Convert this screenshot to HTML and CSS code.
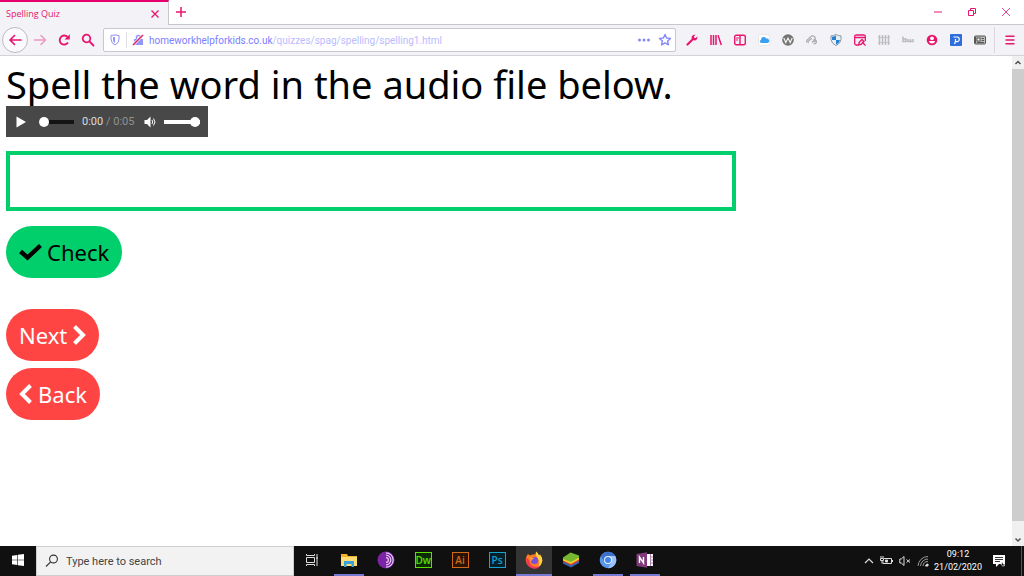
FILE: index.html
```html
<!DOCTYPE html>
<html lang="en">
<head>
<meta charset="utf-8">
<title>Spelling Quiz</title>
<link rel="stylesheet" href="styles.css">
</head>
<body>
<div class="screen">
  <header class="titlebar">
    <div class="tab">
      <span class="tab-title">Spelling Quiz</span>
      <button class="tab-close" aria-label="Close tab"><svg width="8" height="8" viewBox="0 0 8 8"><path d="M.5 .5l7 7M7.500 .5l-7 7" stroke="currentColor" stroke-width="1.300"/></svg></button>
    </div>
    <div class="strip">
      <button class="new-tab" aria-label="New tab"><svg width="12" height="12" viewBox="0 0 12 12"><path d="M6 1v10M1 6h10" stroke="currentColor" stroke-width="1.500"/></svg></button>
      <div class="window-controls">
        <button aria-label="Minimise"><svg width="10" height="10" viewBox="0 0 10 10"><path d="M1 5h8" stroke="currentColor"/></svg></button>
        <button aria-label="Restore"><svg width="10" height="10" viewBox="0 0 10 10" fill="none" stroke="currentColor"><path d="M1.500 3.500h5v5h-5zM3.500 3v-1.500h5v5H7"/></svg></button>
        <button aria-label="Close"><svg width="10" height="10" viewBox="0 0 10 10"><path d="M1 1l8 8M9 1L1 9" stroke="currentColor" stroke-width=".8"/></svg></button>
      </div>
    </div>
  </header>

  <nav class="toolbar">
    <button class="back" aria-label="Go back"><svg width="14" height="14" viewBox="0 0 14 14" fill="none" stroke="currentColor" stroke-width="1.700" stroke-linecap="round" stroke-linejoin="round"><path d="M13 7H2M6.500 2.500L2 7l4.500 4.500"/></svg></button>
    <button class="tool faded" aria-label="Go forward"><svg width="14" height="14" viewBox="0 0 14 14" fill="none" stroke="currentColor" stroke-width="1.500" stroke-linecap="round" stroke-linejoin="round"><path d="M1.500 7H12M8 2.500L12.500 7 8 11.500"/></svg></button>
    <button class="tool" aria-label="Reload"><svg width="14" height="14" viewBox="0 0 14 14"><path d="M11 9.500A4.500 4.500 0 1 1 10.500 4" fill="none" stroke="currentColor" stroke-width="1.900"/><path d="M12.800 1.200v5.300H7.500z" fill="currentColor"/></svg></button>
    <button class="tool" aria-label="Search"><svg width="14" height="14" viewBox="0 0 14 14" fill="none" stroke="currentColor" stroke-width="1.800" stroke-linecap="round"><circle cx="5.500" cy="5.500" r="3.800"/><path d="M8.500 8.500l4 4"/></svg></button>
    <div class="urlbar">
      <svg width="12" height="12" viewBox="0 0 12 12" fill="none" stroke="#8f92ee"><path d="M2 1.500Q6 .5 10 1.500V5Q10 9 6 11 2 9 2 5z"/><path d="M6 3v6Q4 8 4 5V3.200z" fill="#8f92ee" stroke="none"/></svg>
      <span class="url-line"></span>
      <svg width="12" height="12" viewBox="0 0 12 12"><rect x="2" y="5" width="9" height="6" fill="#9295fa"/><path d="M4.500 5V3.500a2 2 0 0 1 4 0V5" fill="none" stroke="#9295fa" stroke-width="1.500"/><path d="M1 11L11 1" stroke="#fff" stroke-width="2.600"/><path d="M1 11L11 1" stroke="#e3256b" stroke-width="1.600"/></svg>
      <span class="url"><span class="host">homeworkhelpforkids.co.uk</span>/quizzes/spag/spelling/spelling1.html</span>
      <button class="url-action" aria-label="Page actions"><svg width="14" height="12" viewBox="0 0 14 12" fill="#8589f5"><circle cx="2.500" cy="6" r="1.500"/><circle cx="7" cy="6" r="1.500"/><circle cx="11.500" cy="6" r="1.500"/></svg></button>
      <button class="url-action" aria-label="Bookmark"><svg width="14" height="14" viewBox="0 0 14 14"><path d="M7 1.500l1.600 3.500 3.900.4-2.900 2.600.9 3.900L7 9.900l-3.500 2 .9-3.900L1.500 5.400l3.900-.4z" fill="none" stroke="#8589f5" stroke-width="1.400" stroke-linejoin="round"/></svg></button>
    </div>
    <div class="extensions">
      <button class="tool" aria-label="Developer tools"><svg width="12" height="12" viewBox="0 0 12 12"><path d="M1.500 10.500L7 5" stroke="currentColor" stroke-width="2.200" stroke-linecap="round"/><path d="M9.500.8L8 2.300l.2 1.500 1.500.2 1.600-1.500C12 5 10 7 7.500 6.300L5.700 4.500C5 2.500 7 0 9.500.8z" fill="currentColor"/></svg></button>
      <button class="tool" aria-label="Library"><svg width="12" height="12" viewBox="0 0 12 12" stroke="currentColor" stroke-width="1.500"><path d="M1 1v10M3.500 1v10M6 1v10M8 1.300l3.300 9.700"/></svg></button>
      <button class="tool" aria-label="Sidebars"><svg width="12" height="12" viewBox="0 0 12 12" fill="none" stroke="currentColor" stroke-width="1.400"><rect x=".7" y="1.200" width="10.600" height="9.600" rx="1.500"/><path d="M6 1v10"/><path d="M2 4h3M2 6h2" stroke-width="1"/></svg></button>
      <button class="tool" aria-label="Cloud"><svg width="12" height="12" viewBox="0 0 12 12"><rect x=".5" y=".5" width="11" height="11" rx="2" fill="#fff" stroke="#e6e6eb"/><path d="M3 9a1.800 1.800 0 0 1 0-3.300A2.800 2.800 0 0 1 8.300 4.600 2.200 2.200 0 0 1 9.500 9z" fill="#3aa0f3"/></svg></button>
      <button class="tool" aria-label="WordPress"><svg width="12" height="12" viewBox="0 0 12 12"><circle cx="6" cy="6" r="5.800" fill="#747474"/><path d="M1.800 4l2 4.500L6 4l2.200 4.500 2-4.500" fill="none" stroke="#f2f2f2" stroke-width="1.200"/></svg></button>
      <button class="tool" aria-label="Link tool"><svg width="12" height="12" viewBox="0 0 12 12" fill="none" stroke="#aaa" stroke-width="1.200"><path d="M1 8.500Q0 6 2.500 5l2-2a2.600 2.600 0 0 1 4.500 2.500L6 8.500"/><path d="M2.500 9a1.500 1.500 0 0 1 .5-2.500L6 4.500M7.500 9.500a2 2 0 1 0 0-3.500M8 8l2-1"/></svg></button>
      <button class="tool" aria-label="Security"><svg width="12" height="12" viewBox="0 0 12 12"><path d="M6 .5Q8.500 2 11 1.800V5.500Q10.500 9.500 6 11.600 1.500 9.500 1 5.500V1.800Q3.500 2 6 .5z" fill="#e7f0f7" stroke="#8c99a6"/><path d="M6 1.500V6H2V2.700Q4 2.700 6 1.500zM6 6h4Q9.500 8.800 6 10.500z" fill="#2580d0"/></svg></button>
      <button class="tool" aria-label="Page editor"><svg width="12" height="12" viewBox="0 0 12 12" fill="none" stroke="currentColor" stroke-width="1.300"><path d="M11.300 7V2.500Q11.300 1 9.800 1H2.200Q.7 1 .7 2.500v7Q.7 11 2.200 11H5M1 3.500h10"/><path d="M5 8.500l3-3 2 2-3 3H5zM8 8l3.500 3.500"/></svg></button>
      <button class="tool" aria-label="Fence"><svg width="12" height="12" viewBox="0 0 12 12" stroke="#bcbcc0"><path d="M1.500 1v10M4.500 1v10M7.500 1v10M10.500 1v10" stroke-width="1.500"/><path d="M0 3.500h12M0 8.500h12" stroke-width=".7"/></svg></button>
      <button class="tool" aria-label="bw"><svg width="12" height="12" viewBox="0 0 12 12" fill="none" stroke="#bbb" stroke-width="1.500"><path d="M1 2.500v5h3V5H1M6 5v2.500h5V5M8.500 5v2.500"/></svg></button>
      <button class="tool" aria-label="Account"><svg width="12" height="12" viewBox="0 0 12 12"><circle cx="6" cy="6" r="5.300" fill="currentColor"/><circle cx="6" cy="4.300" r="1.900" fill="#fff"/><path d="M2.800 7h6.400Q8.500 9.500 6 9.500T2.800 7z" fill="#fff"/></svg></button>
      <button class="tool" aria-label="Payments"><svg width="12" height="12" viewBox="0 0 12 12"><rect width="12" height="12" rx="1" fill="#2e6fdd"/><path d="M3.500 3H7a2.300 2.300 0 0 1 0 4.600H5.500V5M4.500 10l1-2.500" fill="none" stroke="#fff" stroke-width="1.200"/></svg></button>
      <button class="tool" aria-label="News reader"><svg width="12" height="12" viewBox="0 0 12 12" fill="none" stroke="#555"><rect x=".5" y="2" width="11" height="8" rx="1" fill="#bbb"/><rect x="3" y="4" width="3" height="3" fill="#fff"/><path d="M1.500 3v6M7.500 4.500H10M7.500 6.500H10M3 8.500h7"/></svg></button>
    </div>
    <span class="divider"></span>
    <button class="tool" aria-label="Menu"><svg width="10" height="10" viewBox="0 0 10 10" stroke="currentColor" stroke-width="1.500"><path d="M.5 1.200h9M.5 5h9M.5 8.800h9"/></svg></button>
  </nav>

  <div class="viewport">
    <main class="page">
      <h1>Spell the word in the audio file below.</h1>
      <div class="player">
        <button class="player-button" aria-label="Play"><svg width="10" height="12" viewBox="0 0 10 12"><path d="M.5 .5l9.500 5.500-9.500 5.500z" fill="#fff"/></svg></button>
        <input class="slider seek" type="range" min="0" max="5" value="0" aria-label="Position">
        <span class="time">0:00 <span class="duration">/ 0:05</span></span>
        <button class="player-button" aria-label="Mute"><svg width="13" height="12" viewBox="0 0 13 12"><path d="M.5 4H3l3.500-3.500v11L3 8H.5z" fill="#fff"/><path d="M8 4q1.500 2 0 4M9.500 2.500q3 3.500 0 7" fill="none" stroke="#fff"/></svg></button>
        <input class="slider volume" type="range" min="0" max="100" value="100" aria-label="Volume">
      </div>
      <input class="answer" type="text" aria-label="Your spelling">
      <button class="pill check"><svg width="23" height="18" viewBox="0 0 23 18"><path d="M1.500 8.500l7 6L21.500 2.500" fill="none" stroke="currentColor" stroke-width="4.400"/></svg>Check</button>
      <div class="links">
        <button class="pill">Next<svg width="14" height="20" viewBox="0 0 14 20"><path d="M2.500 1.500L11 10l-8.500 8.500" fill="none" stroke="currentColor" stroke-width="4"/></svg></button>
        <button class="pill"><svg width="14" height="20" viewBox="0 0 14 20"><path d="M11.500 1.500L3 10l8.500 8.500" fill="none" stroke="currentColor" stroke-width="4"/></svg>Back</button>
      </div>
    </main>
    <div class="scrollbar">
      <svg width="12" height="13" viewBox="0 0 12 13"><path d="M3.500 8L6 5.500 8.500 8" fill="none" stroke="#505050" stroke-width="1.500"/></svg>
      <div class="thumb"></div>
      <svg width="12" height="13" viewBox="0 0 12 13"><path d="M3.500 5.500L6 8l2.500-2.500" fill="none" stroke="#505050" stroke-width="1.500"/></svg>
    </div>
  </div>

  <footer class="taskbar">
    <button class="app start" aria-label="Start"><svg width="12" height="12" viewBox="0 0 12 12" fill="#fff"><path d="M0 1.700l5.300-.8v4.800H0zM5.900.8L12 0v5.700H5.900zM0 6.300h5.300v4.800L0 10.300zM5.900 6.300H12V12l-6.100-.8z"/></svg></button>
    <label class="search">
      <svg width="14" height="14" viewBox="0 0 14 14" fill="none" stroke="#333" stroke-width="1.100"><circle cx="8.500" cy="5" r="3.900"/><path d="M5.700 7.800L1 12.500"/></svg>
      <input type="text" placeholder="Type here to search" aria-label="Search Windows">
    </label>
    <div class="apps">
      <button class="app" aria-label="Task view"><svg width="12" height="12" viewBox="0 0 12 12" fill="none" stroke="#ddd"><path d="M.5 3.500h8v5h-8zM.5 0v1.500h8V0M.5 12v-1.500h8V12M11 0v12M10 4h2"/></svg></button>
      <button class="app open" aria-label="File Explorer"><svg width="18" height="16" viewBox="0 0 18 16"><path d="M1 2h6l1 2h9v10H1z" fill="#f0b429"/><path d="M1 5h16v9H1z" fill="#ffdc73"/><path d="M4 15V9h10v6h-2.500v-3h-5v3z" fill="#36a3dc"/></svg></button>
      <button class="app" aria-label="Tor Browser"><svg width="18" height="18" viewBox="0 0 18 18"><circle cx="9" cy="9" r="8.500" fill="#7b25a6"/><g fill="none" stroke="#e9c9f5" stroke-width="1.200"><path d="M9 1.800a7.200 7.200 0 0 1 0 14.400M9 4.200a4.800 4.800 0 0 1 0 9.600M9 6.600a2.400 2.400 0 0 1 0 4.800"/></g></svg></button>
      <button class="app" aria-label="Dreamweaver"><span class="adobe dw">Dw</span></button>
      <button class="app" aria-label="Illustrator"><span class="adobe ai">Ai</span></button>
      <button class="app" aria-label="Photoshop"><span class="adobe ps">Ps</span></button>
      <button class="app open active" aria-label="Firefox"><svg width="18" height="18" viewBox="0 0 18 18"><path d="M3 3l2 1.500Q7 3 9 3.500 11 3 11 .5q2 1.500 3 4l1-1q2.500 3 2.300 6.500A8.300 8.300 0 1 1 1 7Q1.300 5 3 3z" fill="#ff7a22"/><path d="M11 .5q2 1.500 3 4l1-1q2.500 3 2.300 6.500-.8 4-4 6Q16 10 11 4.500z" fill="#ffd33c"/><path d="M1.500 6.500Q0 15 8.500 17.800q4 .5 6.500-2.500Q5 18 4.500 10z" fill="#f5315e"/><circle cx="9.500" cy="9.500" r="3.600" fill="#7650dc"/><path d="M4.500 6q3 0 5 1.500-2 .2-2.500 1.500l-1.500 2z" fill="#ff9b2c"/></svg></button>
      <button class="app" aria-label="BlueStacks"><svg width="18" height="16" viewBox="0 0 18 16"><path d="M1 10l8-4 8 3v2l-8 4.500-8-4z" fill="#2769b5"/><path d="M1 8l8-4 8 3v2l-8 4.500-8-4z" fill="#d93d32"/><path d="M1 6.500L9 3l8 2.500v2L9 12 1 8.500z" fill="#f5cc2e"/><path d="M1 5.500L8.500.5 17 3.500v2L9 10 1 7z" fill="#75b82d"/></svg></button>
      <button class="app open" aria-label="Chromium"><svg width="18" height="18" viewBox="0 0 18 18"><circle cx="9" cy="9" r="8.300" fill="#5b98ec"/><path d="M1.800 5A8.300 8.300 0 0 1 16.300 5H9L5.500 11z" fill="#3b70cb"/><path d="M9 17.300A8.300 8.300 0 0 0 16.300 5H9l3.700 6z" fill="#9bc3fa"/><circle cx="9" cy="9" r="4" fill="#e9f2ff"/><circle cx="9" cy="9" r="3" fill="#4384e3"/></svg></button>
      <button class="app open" aria-label="OneNote"><svg width="18" height="16" viewBox="0 0 18 16"><path d="M9 2h8v12H9z" fill="#fff"/><path d="M14.500 2v12M14.500 5H17M14.500 8H17M14.500 11H17" stroke="#a878a8" stroke-width=".9"/><path d="M.5 2L11 .3v15.400L.5 14z" fill="#80397b"/><path d="M3.500 11V5l4 6V5" fill="none" stroke="#fff" stroke-width="1.400"/></svg></button>
    </div>
    <div class="tray">
      <svg width="10" height="12" viewBox="0 0 10 12"><path d="M1 8l4-4 4 4" fill="none" stroke="#ddd" stroke-width="1.200"/></svg>
      <svg width="13" height="12" viewBox="0 0 13 12" fill="none" stroke="#ddd"><path d="M4 3.500h7.500v5H3V6.500M12.500 5v2"/><path d="M1 1v2M3 1v2M.5 3.500h3v2h-3zM2 5.500v3"/><path d="M5.500 5h2v2h-2z" fill="#ddd"/></svg>
      <svg width="12" height="12" viewBox="0 0 12 12" fill="none" stroke="#ddd"><path d="M.8 4h1.500L5 1.500v9L2.300 8H.8zM7.500 4.500l3.500 3M11 4.500l-3.500 3"/></svg>
      <svg width="12" height="12" viewBox="0 0 12 12" fill="none" stroke="#999"><path d="M1 11A10 10 0 0 1 11 1.500M3.500 11A7.500 7.500 0 0 1 11 4M6 11a5 5 0 0 1 5-4.500"/><path d="M8.500 11A2.500 2.500 0 0 1 11 9v2z" fill="#ddd" stroke="#ddd"/></svg>
      <div class="clock"><span>09:12</span><span>21/02/2020</span></div>
      <svg width="14" height="14" viewBox="0 0 14 14"><path d="M1 1h12v9H7l-3 3v-3H1z" fill="#fff"/><path d="M3 3.500h8M3 5.500h8M3 7.500h5" stroke="#222" stroke-width=".9"/><path d="M11 8a2 2 0 1 0 2 3 2.500 2.500 0 0 1-2-3z" fill="#111" stroke="#fff" stroke-width=".8"/></svg>
      <span class="peek"></span>
    </div>
  </footer>
</div>
</body>
</html>
```

FILE: styles.css
```css
* { box-sizing: border-box; }

body {
  margin: 0;
  background: #fff;
  color: #000;
  font-family: "Noto Sans", "Open Sans", sans-serif;
}

button {
  display: inline-flex;
  align-items: center;
  justify-content: center;
  margin: 0;
  padding: 0;
  border: 0;
  background: none;
  color: inherit;
  font: inherit;
}

svg { display: block; flex: none; }

.screen {
  display: flex;
  flex-direction: column;
  min-height: 100vh;
}

/* Tab strip */
.titlebar {
  display: flex;
  height: 25px;
  color: #e8156f;
}

.tab {
  display: flex;
  align-items: center;
  justify-content: space-between;
  width: 169px;
  padding: 0 9px 0 6px;
  border-top: 2px solid #e6006e;
  border-right: 1px solid #c8c8cc;
  background: #f2f2f7;
  font-family: "Open Sans", sans-serif;
  font-size: 9px;
}

.strip {
  display: flex;
  flex: 1;
  align-items: center;
  justify-content: space-between;
  padding: 0 1px 0 6px;
  border-bottom: 1px solid #c8c8cc;
}

.window-controls { display: flex; }
.window-controls button { width: 34px; height: 24px; }

/* Navigation toolbar */
.toolbar {
  display: flex;
  align-items: center;
  height: 31px;
  padding: 0 2px;
  border-bottom: 1px solid #d4d4d8;
  background: #f2f2f7;
  color: #e8156f;
}

.back {
  width: 26px;
  height: 26px;
  border: 1px solid #bbbbc0;
  border-radius: 50%;
  background: #fbfbfd;
}

.tool { width: 24px; height: 24px; }
.faded { opacity: 0.4; }

.urlbar {
  display: flex;
  flex: 1;
  align-items: center;
  gap: 5px;
  min-width: 0;
  height: 24px;
  margin: 0 4px 0 3px;
  padding: 0 2px 0 5px;
  border: 1px solid #c8c8ce;
  border-radius: 2px;
  background: #fff;
}

.url-line { width: 1px; height: 16px; background: #dddde2; }

.url {
  flex: 1;
  overflow: hidden;
  white-space: nowrap;
  color: #b9bbff;
  font-family: Roboto, "Open Sans", sans-serif;
  font-size: 10px;
}

.host { color: #7b7eff; }
.url-action { width: 16px; }
.extensions { display: flex; }
.divider { width: 1px; height: 26px; margin: 0 3px 0 2px; background: #d8d8dd; }

/* Web page */
.viewport { display: flex; flex: 1; }

.page {
  display: flex;
  flex: 1;
  flex-direction: column;
  align-items: flex-start;
  padding: 6px;
}

h1 {
  margin: 0;
  font-size: 38px;
  font-weight: 400;
  line-height: 44px;
}

.player {
  display: flex;
  align-items: center;
  height: 31px;
  margin-bottom: 14px;
  padding: 0 8px;
  background: #484848;
}

.player-button { width: 14px; height: 20px; }

.slider {
  height: 12px;
  margin: 0;
  border-radius: 2px;
  appearance: none;
  background: linear-gradient(#141414, #141414) center / 100% 4px no-repeat;
}

.slider::-webkit-slider-thumb {
  width: 10px;
  height: 10px;
  border-radius: 50%;
  appearance: none;
  background: #fff;
}

.seek { width: 35px; margin: 0 8px 0 11px; }
.volume { width: 36px; margin-left: 7px; background-image: linear-gradient(#fff, #fff); }

.time {
  width: 61px;
  color: #ddd;
  font-family: Roboto, "Open Sans", sans-serif;
  font-size: 11px;
  white-space: nowrap;
}

.duration { color: #929292; }

.answer {
  width: 73%;
  height: 60px;
  margin-bottom: 15px;
  padding: 0 8px;
  border: 4px solid #00cf6b;
  background: #fff;
  font: inherit;
  font-size: 38px;
}

.pill {
  gap: 5px;
  height: 52px;
  padding: 0 13px;
  border-radius: 26px;
  background: #ff4444;
  color: #fff;
  font-size: 22px;
  line-height: 28px;
}

.check { background: #00cf6b; color: #000; }

.links {
  display: flex;
  flex-direction: column;
  align-items: flex-start;
  gap: 7px;
  margin-top: 31px;
}

.scrollbar {
  display: flex;
  flex-direction: column;
  width: 12px;
  background: #f0f0f0;
}

.thumb { flex: 1; margin-bottom: 12px; background: #cdcdcd; }

/* Desktop taskbar */
.taskbar {
  display: flex;
  height: 30px;
  background: #101010;
  color: #fff;
}

.app { width: 36px; height: 30px; border-bottom: 2px solid transparent; }
.apps { display: flex; gap: 1px; }
.open { background: linear-gradient(#7679d2, #7679d2) center bottom / 30px 2px no-repeat border-box; }
.active { background-color: #343434; background-size: 36px 2px; }

.search {
  display: flex;
  align-items: center;
  gap: 7px;
  width: 258px;
  padding: 0 8px;
  border: 1px solid #cfcfcf;
  background: #f2f2f2;
}

.search input {
  flex: 1;
  min-width: 0;
  padding: 0;
  border: 0;
  background: none;
  font-family: Roboto, "Open Sans", sans-serif;
  font-size: 11px;
}

.search input::placeholder { color: #444; opacity: 1; }

.adobe {
  width: 17px;
  height: 16px;
  border: 1px solid;
  font-family: "Open Sans", sans-serif;
  font-size: 10px;
  font-weight: 600;
  line-height: 14px;
}

.dw { background: #0b2b05; color: #5be000; }
.ai { background: #2a1303; color: #d06a16; }
.ps { background: #04202b; color: #13a5cf; }

.tray {
  display: flex;
  align-items: center;
  gap: 6px;
  margin-left: auto;
  padding-right: 2px;
}

.clock {
  display: flex;
  flex-direction: column;
  align-items: center;
  width: 46px;
  margin-right: 5px;
  font-family: Roboto, "Open Sans", sans-serif;
  font-size: 9px;
  line-height: 13px;
}

.peek { width: 1px; height: 30px; margin-left: 9px; background: #555; }
```
